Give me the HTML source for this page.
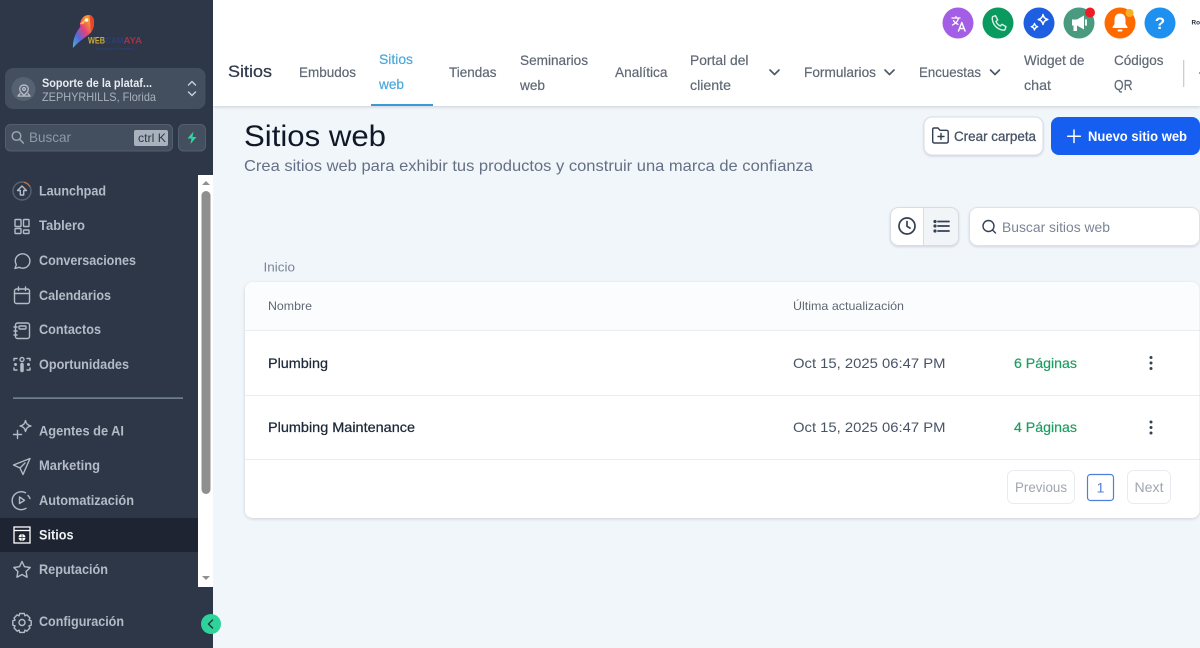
<!DOCTYPE html>
<html lang="es">
<head>
<meta charset="utf-8">
<title>Sitios web</title>
<style>
html,body{margin:0;padding:0;width:1200px;height:648px;overflow:hidden;background:#f1f6fa}
svg{display:block}
text{font-family:"Liberation Sans",sans-serif;white-space:pre}
.m{font-size:14px;font-weight:700;fill:#b4bbc6}
.n{font-size:14px;fill:#5f6875;stroke:#5f6875;stroke-width:.2}
.ic{fill:none;stroke:#b4bbc6;stroke-width:1.4;stroke-linecap:round;stroke-linejoin:round}
</style>
</head>
<body>
<svg xmlns="http://www.w3.org/2000/svg" width="1200" height="648" viewBox="0 0 1200 648">
<defs>
<linearGradient id="pg" x1="0" y1="1" x2="1" y2="0">
<stop offset="0" stop-color="#3fb6d8"/><stop offset=".3" stop-color="#5a66d8"/><stop offset=".55" stop-color="#e8407a"/><stop offset=".8" stop-color="#f2a12c"/><stop offset="1" stop-color="#e8452f"/>
</linearGradient>
<filter id="sh" x="-5%" y="-5%" width="110%" height="110%"><feDropShadow dx="0" dy="1" stdDeviation="1.500" flood-color="#101828" flood-opacity=".16"/></filter>
<filter id="sh2" x="-10%" y="-10%" width="120%" height="130%"><feDropShadow dx="0" dy="1" stdDeviation="1" flood-color="#101828" flood-opacity=".14"/></filter>
</defs>

<rect width="1200" height="648" fill="#f1f6fa"/>

<!-- header -->
<rect x="213" y="0" width="987" height="106" fill="#fff" filter="url(#sh)"/>
<rect x="213" y="0" width="987" height="106" fill="#fff"/>

<circle cx="958" cy="23" r="15.500" fill="#a45ee5"/>
<path d="M952 18h8M956 16.500v1.500M958.500 18c-.6 3-2.600 5.500-6 7M953.500 20.500c1 1.800 2.500 3 4.500 3.800" fill="none" stroke="#fff" stroke-width="1.300" stroke-linecap="round"/>
<path d="M958.500 31l3.300-8.500 3.300 8.500M959.700 28.500h4.300" fill="none" stroke="#fff" stroke-width="1.400" stroke-linecap="round" stroke-linejoin="round"/>

<circle cx="998" cy="23" r="15.500" fill="#0a9a60"/>
<path d="M993 16.500l2.500-.8 2.200 4.300-1.700 1.500c.8 2 2.300 3.500 4.300 4.500l1.700-1.700 4 2.300-.8 2.600c-.3.700-1 1-1.700 1-6.200-.6-10.800-5.300-11.300-11.700 0-.9.300-1.700.8-2z" fill="none" stroke="#d8f3e6" stroke-width="1.400" stroke-linejoin="round"/>

<circle cx="1039" cy="23" r="15.500" fill="#1d5fe0"/>
<path d="M1043 14.500c.7 3 1.800 4.200 4.800 5-3 .8-4.100 2-4.800 5-.7-3-1.800-4.200-4.800-5 3-.8 4.100-2 4.800-5z" fill="none" stroke="#fff" stroke-width="1.500" stroke-linejoin="round"/>
<path d="M1034.500 23.500c.5 2 1.200 2.700 3.200 3.200-2 .5-2.700 1.200-3.200 3.200-.5-2-1.200-2.700-3.200-3.200 2-.5 2.700-1.200 3.200-3.200z" fill="none" stroke="#fff" stroke-width="1.400" stroke-linejoin="round"/>

<circle cx="1079" cy="23" r="15.500" fill="#4a9a80"/>
<path d="M1072 19.500h5l7-4v14l-7-4h-5z" fill="#fff"/>
<rect x="1073.500" y="25" width="3.500" height="6" fill="#fff"/>
<path d="M1086 20v5" stroke="#fff" stroke-width="1.800" stroke-linecap="round"/>
<circle cx="1090" cy="12.500" r="5" fill="#ee1c25"/>

<circle cx="1120" cy="23" r="15.500" fill="#ff6a00"/>
<path d="M1120 13.500c-3.700 0-5.500 2.800-5.500 6v4.500l-2 3v1h15v-1l-2-3v-4.500c0-3.200-1.800-6-5.500-6z" fill="#fff"/>
<rect x="1117.500" y="29.500" width="5" height="2" rx="1" fill="#fff"/>
<circle cx="1129.500" cy="13" r="4" fill="#f6b01e"/>

<circle cx="1160" cy="23" r="15.500" fill="#1e90f0"/>
<text x="1160" y="29" font-size="17" font-weight="700" fill="#fff" text-anchor="middle">?</text>

<text x="1191.500" y="24.500" font-size="6" font-weight="700" fill="#1f2937" textLength="8.500" lengthAdjust="spacingAndGlyphs">Ro</text>

<!-- nav -->
<text x="228" y="77" font-size="17" fill="#2f3a4a" stroke="#2f3a4a" stroke-width=".25" textLength="44" lengthAdjust="spacingAndGlyphs">Sitios</text>
<text class="n" x="299" y="77" textLength="57" lengthAdjust="spacingAndGlyphs">Embudos</text>
<text x="379" y="64" font-size="14" fill="#4aa8dc" stroke="#4aa8dc" stroke-width=".2" textLength="34" lengthAdjust="spacingAndGlyphs">Sitios</text>
<text x="379" y="89" font-size="14" fill="#4aa8dc" stroke="#4aa8dc" stroke-width=".2" textLength="25" lengthAdjust="spacingAndGlyphs">web</text>
<rect x="371" y="104" width="62" height="2" fill="#3b9ad6"/>
<text class="n" x="449" y="77" textLength="47.500" lengthAdjust="spacingAndGlyphs">Tiendas</text>
<text class="n" x="520" y="65" textLength="68" lengthAdjust="spacingAndGlyphs">Seminarios</text>
<text class="n" x="520" y="90" textLength="25" lengthAdjust="spacingAndGlyphs">web</text>
<text class="n" x="615" y="77" textLength="52.500" lengthAdjust="spacingAndGlyphs">Analítica</text>
<text class="n" x="690" y="65" textLength="58.500" lengthAdjust="spacingAndGlyphs">Portal del</text>
<text class="n" x="690" y="90" textLength="41" lengthAdjust="spacingAndGlyphs">cliente</text>
<path d="M770 70l4.500 4.500 4.500-4.500" fill="none" stroke="#4b5563" stroke-width="1.600" stroke-linecap="round" stroke-linejoin="round"/>
<text class="n" x="804" y="77" textLength="72" lengthAdjust="spacingAndGlyphs">Formularios</text>
<path d="M885 70l4.500 4.500 4.500-4.500" fill="none" stroke="#4b5563" stroke-width="1.600" stroke-linecap="round" stroke-linejoin="round"/>
<text class="n" x="919" y="77" textLength="62" lengthAdjust="spacingAndGlyphs">Encuestas</text>
<path d="M990.500 70l4.500 4.500 4.500-4.500" fill="none" stroke="#4b5563" stroke-width="1.600" stroke-linecap="round" stroke-linejoin="round"/>
<text class="n" x="1024" y="65" textLength="60.500" lengthAdjust="spacingAndGlyphs">Widget de</text>
<text class="n" x="1024" y="90" textLength="27" lengthAdjust="spacingAndGlyphs">chat</text>
<text class="n" x="1114" y="65" textLength="49.500" lengthAdjust="spacingAndGlyphs">Códigos</text>
<text class="n" x="1114" y="90" font-size="14" style="font-size:15px" textLength="18.500" lengthAdjust="spacingAndGlyphs">QR</text>
<rect x="1183" y="60" width="1.300" height="27" fill="#c9ced6"/>
<rect x="1199" y="72" width="1" height="2" fill="#9aa1ac"/>

<!-- page heading -->
<text x="244" y="146" font-size="30" fill="#101828" textLength="142" lengthAdjust="spacingAndGlyphs">Sitios web</text>
<text x="244" y="171" font-size="16" fill="#667085" textLength="569" lengthAdjust="spacingAndGlyphs">Crea sitios web para exhibir tus productos y construir una marca de confianza</text>

<rect x="924" y="117" width="119" height="38" rx="8" fill="#fff" stroke="#d8dde3" filter="url(#sh2)"/>
<path d="M932.700 131v-1.500c0-1 .7-1.500 1.500-1.500h3.800l2 2.300h6.500c1 0 1.700.7 1.700 1.700v9.300c0 1-.7 1.700-1.700 1.700h-12.100c-1 0-1.700-.7-1.700-1.700z" fill="none" stroke="#344054" stroke-width="1.400" stroke-linejoin="round"/>
<path d="M941 133.500v6M938 136.500h6" fill="none" stroke="#344054" stroke-width="1.400" stroke-linecap="round"/>
<text x="954" y="141" font-size="14" fill="#475467" stroke="#475467" stroke-width=".3" textLength="82" lengthAdjust="spacingAndGlyphs">Crear carpeta</text>

<path d="M1059 117h133a8 8 0 0 1 8 8v22a8 8 0 0 1-8 8h-133a8 8 0 0 1-8-8v-22a8 8 0 0 1 8-8z" fill="#155eef"/>
<path d="M1074 130v12.500M1067.700 136.200h12.600" stroke="#fff" stroke-width="1.500" stroke-linecap="round"/>
<text x="1088" y="141" font-size="14" font-weight="700" fill="#fff" textLength="99" lengthAdjust="spacingAndGlyphs">Nuevo sitio web</text>

<!-- toolbar -->
<rect x="890.500" y="207.500" width="68" height="38" rx="8" fill="#fff" stroke="#d8dde3" filter="url(#sh2)"/>
<path d="M923.500 207.500h27a8 8 0 0 1 8 8v22a8 8 0 0 1-8 8h-27z" fill="#f2f5f8" stroke="#d8dde3"/>
<circle cx="907" cy="226" r="8" fill="none" stroke="#344054" stroke-width="1.700"/>
<path d="M907 221.500v4.800l3 1.800" fill="none" stroke="#344054" stroke-width="1.700" stroke-linecap="round" stroke-linejoin="round"/>
<path d="M938 221.500h11M938 226h11M938 231h11" stroke="#344054" stroke-width="1.800" stroke-linecap="round"/>
<circle cx="935" cy="221.500" r="1.600" fill="#344054"/><circle cx="935" cy="226" r="1.600" fill="#344054"/><circle cx="935" cy="231" r="1.600" fill="#344054"/>

<rect x="969.500" y="207.500" width="230" height="38" rx="8" fill="#fff" stroke="#dfe3e8" filter="url(#sh2)"/>
<circle cx="988.500" cy="226" r="5.500" fill="none" stroke="#344054" stroke-width="1.400"/>
<path d="M992.500 230l3 3" stroke="#344054" stroke-width="1.400" stroke-linecap="round"/>
<text x="1002" y="232" font-size="14" fill="#7b8595" textLength="108" lengthAdjust="spacingAndGlyphs">Buscar sitios web</text>

<text x="263.500" y="271.500" font-size="13" fill="#7b8595" textLength="31.500" lengthAdjust="spacingAndGlyphs">Inicio</text>

<!-- card -->
<rect x="245" y="282" width="954.500" height="236" rx="8" fill="#fff" filter="url(#sh)"/>
<path d="M253 282h938.500a8 8 0 0 1 8 8v40.500h-954.500v-40.500a8 8 0 0 1 8-8z" fill="#fbfcfd"/>
<rect x="245" y="330" width="954.500" height="1" fill="#e9ecf0"/>
<rect x="245" y="395" width="954.500" height="1" fill="#e9ecf0"/>
<rect x="245" y="459" width="954.500" height="1" fill="#e9ecf0"/>

<text x="268" y="310" font-size="12" fill="#5f6875" textLength="44" lengthAdjust="spacingAndGlyphs">Nombre</text>
<text x="793" y="310" font-size="12" fill="#5f6875" textLength="111" lengthAdjust="spacingAndGlyphs">Última actualización</text>

<text x="268" y="368" font-size="14" fill="#1d2939" stroke="#1d2939" stroke-width=".25" textLength="60" lengthAdjust="spacingAndGlyphs">Plumbing</text>
<text x="793" y="368" font-size="14" fill="#475467" textLength="152.500" lengthAdjust="spacingAndGlyphs">Oct 15, 2025 06:47 PM</text>
<text x="1014" y="368" font-size="14" fill="#1f9d63" stroke="#1f9d63" stroke-width=".2" textLength="63" lengthAdjust="spacingAndGlyphs">6 Páginas</text>
<circle cx="1151" cy="357.500" r="1.500" fill="#344054"/><circle cx="1151" cy="363" r="1.500" fill="#344054"/><circle cx="1151" cy="368.500" r="1.500" fill="#344054"/>

<text x="268" y="432" font-size="14" fill="#1d2939" stroke="#1d2939" stroke-width=".25" textLength="147" lengthAdjust="spacingAndGlyphs">Plumbing Maintenance</text>
<text x="793" y="432" font-size="14" fill="#475467" textLength="152.500" lengthAdjust="spacingAndGlyphs">Oct 15, 2025 06:47 PM</text>
<text x="1014" y="432" font-size="14" fill="#1f9d63" stroke="#1f9d63" stroke-width=".2" textLength="63" lengthAdjust="spacingAndGlyphs">4 Páginas</text>
<circle cx="1151" cy="422" r="1.500" fill="#344054"/><circle cx="1151" cy="427.500" r="1.500" fill="#344054"/><circle cx="1151" cy="433" r="1.500" fill="#344054"/>

<rect x="1007.500" y="470.500" width="67" height="33" rx="6" fill="#fff" stroke="#e8ebef"/>
<text x="1015" y="492" font-size="14" fill="#a0a6b0" textLength="52" lengthAdjust="spacingAndGlyphs">Previous</text>
<rect x="1087.500" y="474.500" width="26" height="26" rx="3" fill="#fff" stroke="#4f7fd8" stroke-width="1.200"/>
<text x="1100.500" y="492.500" font-size="14" fill="#4f7fd8" text-anchor="middle">1</text>
<rect x="1127.500" y="470.500" width="43" height="33" rx="6" fill="#fff" stroke="#e8ebef"/>
<text x="1134.500" y="492" font-size="14" fill="#a0a6b0" textLength="29" lengthAdjust="spacingAndGlyphs">Next</text>

<!-- sidebar -->
<rect x="0" y="0" width="213" height="648" fill="#2d3748"/>

<!-- logo -->
<path d="M80 24c.3-4 3-8.500 8-9 4.500-.4 6.500 3.500 6 9-.5 4.500-2 7.500-4.500 10-5 4-11.500 8-16.500 14-.4-5 .8-10 3-14.500 1.300-2.600 3-5 4.500-7-.6-.5-.6-1.500-.5-2.500z" fill="url(#pg)"/>
<path d="M90 15.500c3 1 4.500 4 4 9-.3 3-1.500 6-3 8-.5-3.500-.5-6-.8-9-.2-3-.4-5.500-.2-8z" fill="#e8452f"/>
<path d="M80 24c1.300-1.800 3.500-3.800 6-4.800-.5 1.500-1.300 3.300-3 5z" fill="#f5c52e"/>
<circle cx="86.500" cy="20" r="1.800" fill="#fff" opacity=".9"/>
<text x="88" y="43.500" font-size="9" font-weight="700" fill="#c9a93a" textLength="17" lengthAdjust="spacingAndGlyphs">WEB</text>
<text x="105.500" y="43.500" font-size="9" font-weight="700" fill="#2a3f78" textLength="18" lengthAdjust="spacingAndGlyphs">CAM</text>
<text x="123.500" y="43.500" font-size="9" font-weight="700" fill="#a8304a" textLength="18.500" lengthAdjust="spacingAndGlyphs">AYA</text>
<text x="95" y="49.500" font-size="3" fill="#31478a" textLength="38" lengthAdjust="spacingAndGlyphs">Soluciones Digitales</text>

<!-- location -->
<rect x="5" y="68" width="200.500" height="41" rx="8" fill="#434e5e"/>
<circle cx="23.500" cy="89" r="12" fill="#566171"/>
<path d="M24 85c-2.700 0-4.300 2-4.300 4 0 2.400 2.800 5 4.300 6.200 1.500-1.200 4.300-3.800 4.300-6.200 0-2-1.600-4-4.300-4z" class="ic" stroke-width="1.200"/>
<circle cx="24" cy="89" r="1.400" class="ic" stroke-width="1.100"/>
<path d="M20 93.500l-2 2.600h12l-2-2.600" class="ic" stroke-width="1.100"/>
<text x="42" y="87" font-size="12" font-weight="700" fill="#e8ebef" textLength="110" lengthAdjust="spacingAndGlyphs">Soporte de la plataf...</text>
<text x="42" y="101" font-size="12" fill="#a9b1bd" textLength="114" lengthAdjust="spacingAndGlyphs">ZEPHYRHILLS, Florida</text>
<path d="M188.500 85l3.500-3.500 3.500 3.500M188.500 92l3.500 3.500 3.500-3.500" fill="none" stroke="#c6ccd5" stroke-width="1.500" stroke-linecap="round" stroke-linejoin="round"/>

<!-- search -->
<rect x="5.500" y="124.500" width="167" height="26.500" rx="5" fill="#434e5e" stroke="#535e6e"/>
<circle cx="16.500" cy="136" r="4.300" fill="none" stroke="#9aa3b0" stroke-width="1.500"/>
<path d="M19.700 139.300l3.600 3.700" stroke="#9aa3b0" stroke-width="1.600" stroke-linecap="round"/>
<text x="29" y="142" font-size="14" fill="#8f99a7" textLength="42" lengthAdjust="spacingAndGlyphs">Buscar</text>
<rect x="134" y="130" width="34" height="16" rx="2" fill="#a9b1bc"/>
<text x="138" y="142" font-size="12" fill="#2d3748" textLength="28" lengthAdjust="spacingAndGlyphs">ctrl K</text>
<rect x="178.500" y="124.500" width="27" height="26.500" rx="5" fill="#434e5e" stroke="#535e6e"/>
<path d="M193.500 131.500l-6 7h4l-1 5.500 6-7h-4z" fill="#2fd6a0"/>

<!-- scroll -->
<rect x="198" y="175" width="15" height="412" fill="#fff"/>
<rect x="201.500" y="191" width="9" height="303" rx="4.500" fill="#8f8f8f"/>
<path d="M202 185l4-4 4 4z" fill="#8f8f8f"/>
<path d="M202 576l4 4 4-4z" fill="#8f8f8f"/>

<rect x="0" y="518" width="198" height="34" fill="#1e2431"/>

<!-- menu icons -->
<circle cx="22" cy="191" r="9" fill="none" stroke="#566171" stroke-width="1.400"/>
<path d="M24 182.200a9 9 0 0 1 6 4.500" fill="none" stroke="#c8703a" stroke-width="1.300"/>
<path d="M22 186l-4.500 4.500h2.800v4.500h3.400v-4.500h2.800z" class="ic" stroke-width="1.100"/>

<rect x="15" y="219.500" width="6" height="7" rx=".8" class="ic"/><rect x="23.500" y="219.500" width="5.500" height="7" rx=".8" class="ic"/>
<rect x="15" y="228.500" width="6" height="5" rx=".8" class="ic"/><rect x="23.500" y="230" width="5.500" height="3.500" rx=".8" class="ic"/>

<path d="M15 268.500l1.300-3.800c-.6-1.100-1-2.300-1-3.700 0-4 3.300-7.200 7.300-7.200s7.300 3.200 7.300 7.200-3.300 7.200-7.300 7.200c-1.300 0-2.500-.3-3.600-.9z" class="ic"/>

<rect x="14.500" y="289" width="15" height="14.500" rx="2" class="ic"/>
<path d="M14.500 293.500h15M18.500 287v3.500M25.500 287v3.500" class="ic"/>

<rect x="15.500" y="323" width="14" height="15.500" rx="2" class="ic"/>
<rect x="19" y="326" width="7" height="3" rx="1" class="ic" stroke-width="1.100"/>
<path d="M14 327h3M14 331h3M14 335h3" class="ic" stroke-width="1.100"/>

<circle cx="22" cy="359.500" r="2" class="ic" stroke-width="1.200"/>
<path d="M22 364.500v6" stroke="#b4bbc6" stroke-width="3.500" stroke-linecap="round"/>
<path d="M14 360.500v-2h3M30 360.500v-2h-3M14 368v2h3M30 368v2h-3" class="ic" stroke-width="1.300"/>
<circle cx="15.500" cy="364.500" r="1.500" fill="#b4bbc6"/><circle cx="28.500" cy="364.500" r="1.500" fill="#b4bbc6"/>

<path d="M25.500 420.500c.8 3.500 2 4.700 5.500 5.500-3.500.8-4.700 2-5.500 5.500-.8-3.500-2-4.700-5.500-5.500 3.500-.8 4.700-2 5.500-5.500z" class="ic" stroke-width="1.300"/>
<path d="M17.500 430.500v8M13.500 434.500h8" class="ic"/>

<path d="M30 458.500l-16.500 6.500 6.500 3 3 6.500zM20 468l5-5" class="ic"/>

<path d="M25.500 492.800a9 9 0 1 0 .5 15.500" class="ic"/>
<path d="M28 495.500a9 9 0 0 1 2 3" class="ic"/>
<path d="M19.500 497v6.500l5-3.200z" class="ic" stroke-width="1.200"/>

<rect x="14" y="527" width="16" height="16" fill="none" stroke="#fff" stroke-width="1.300"/>
<path d="M14 530.500h16" stroke="#fff" stroke-width="1.300"/>
<circle cx="22" cy="537.500" r="3.500" fill="#fff"/>
<path d="M18.500 537.500h7M22 534v7" stroke="#1e2431" stroke-width=".7"/>

<path d="M22 561.500l2.500 5.200 5.700.8-4.100 4 1 5.700-5.100-2.700-5.100 2.700 1-5.700-4.100-4 5.700-.8z" class="ic"/>

<path d="M19.700 613.500h4.600l.6 2.300 2-.9 3.100 3.200-1.100 2 2.300.7v4.400l-2.300.7 1.100 2-3.100 3.200-2-1-.6 2.300h-4.600l-.6-2.300-2 1-3.100-3.200 1.100-2-2.300-.7v-4.400l2.300-.7-1.100-2 3.100-3.200 2 .9z" class="ic" stroke-width="1.200"/>
<circle cx="22" cy="622.500" r="3" class="ic" stroke-width="1.200"/>

<!-- menu text -->
<text class="m" x="39" y="195.500" textLength="67" lengthAdjust="spacingAndGlyphs">Launchpad</text>
<text class="m" x="39" y="230" textLength="46" lengthAdjust="spacingAndGlyphs">Tablero</text>
<text class="m" x="39" y="265" textLength="97" lengthAdjust="spacingAndGlyphs">Conversaciones</text>
<text class="m" x="39" y="300" textLength="72" lengthAdjust="spacingAndGlyphs">Calendarios</text>
<text class="m" x="39" y="334" textLength="62" lengthAdjust="spacingAndGlyphs">Contactos</text>
<text class="m" x="39" y="369" textLength="90" lengthAdjust="spacingAndGlyphs">Oportunidades</text>
<rect x="13" y="397.500" width="170" height="1.200" fill="#8a9bb0"/>
<text class="m" x="39" y="435.500" textLength="85" lengthAdjust="spacingAndGlyphs">Agentes de AI</text>
<text class="m" x="39" y="470" textLength="61" lengthAdjust="spacingAndGlyphs">Marketing</text>
<text class="m" x="39" y="505" textLength="95" lengthAdjust="spacingAndGlyphs">Automatización</text>
<text class="m" x="39" y="539.500" textLength="34.500" lengthAdjust="spacingAndGlyphs" style="fill:#eef0f3">Sitios</text>
<text class="m" x="39" y="574" textLength="69" lengthAdjust="spacingAndGlyphs">Reputación</text>
<text class="m" x="39" y="626" textLength="85" lengthAdjust="spacingAndGlyphs">Configuración</text>

<!-- collapse toggle -->
<circle cx="211" cy="624" r="10" fill="#2ed29b"/>
<path d="M212.500 620l-4 4 4 4" fill="none" stroke="#1f3a3a" stroke-width="1.500" stroke-linecap="round" stroke-linejoin="round"/>
</svg>
</body>
</html>
